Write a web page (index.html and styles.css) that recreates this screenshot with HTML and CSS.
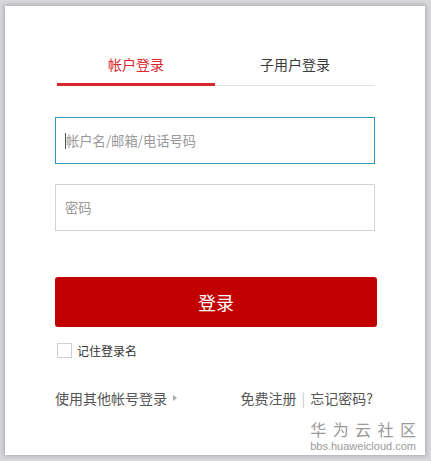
FILE: index.html
```html
<!DOCTYPE html>
<html lang="zh">
<head>
<meta charset="utf-8">
<title>登录</title>
<link rel="stylesheet" href="styles.css">
</head>
<body>
<div class="card">
  <div class="tabs">
    <div class="tab active">帐户登录</div>
    <div class="tab">子用户登录</div>
  </div>
  <div class="field focused"><span class="caret"></span><span class="ph">帐户名/邮箱/电话号码</span></div>
  <div class="field second"><span class="ph">密码</span></div>
  <button class="btn">登录</button>
  <label class="remember"><span class="box"></span><span>记住登录名</span></label>
  <div class="links">
    <span class="other">使用其他帐号登录<span class="tri"></span></span>
    <span class="right">免费注册<span class="sep">|</span>忘记密码?</span>
  </div>
  <div class="mark">
    <div class="mark-cn"><span>华</span><span>为</span><span>云</span><span>社</span><span>区</span></div>
    <div class="mark-en">bbs.huaweicloud.com</div>
  </div>
</div>
</body>
</html>
```
FILE: styles.css
```css
html, body {
  margin: 0;
  padding: 0;
}
body {
  background: #d9d9dd;
  width: 431px;
  height: 461px;
  overflow: hidden;
  font-family: "Noto Sans CJK SC", "Liberation Sans", sans-serif;
}
.card {
  position: relative;
  box-sizing: border-box;
  margin: 6px 0 0 5px;
  width: 420px;
  height: 449px;
  background: #fff;
  box-shadow: 0 0 5px 1px rgba(0, 0, 0, 0.22);
  padding: 48px 0 0 50px;
}
.tabs {
  display: flex;
  margin-left: 2px;
  width: 318px;
  border-bottom: 1px solid #e3e3e3;
}
.tab {
  flex: 1;
  text-align: center;
  font-size: 14px;
  line-height: 20px;
  padding-bottom: 9px;
  color: #3a3a3a;
}
.tab.active {
  color: #d9262c;
  border-bottom: 3px solid #d9262c;
  margin-bottom: -1px;
  flex: 0 0 158px;
}
.field {
  box-sizing: border-box;
  width: 320px;
  height: 47px;
  border: 1px solid #d4d4d4;
  display: flex;
  align-items: center;
  padding-left: 9px;
  font-size: 13.3px;
  color: #999;
}
.field.focused {
  margin-top: 31px;
  border-color: #3596bd;
}
.field.second {
  margin-top: 20px;
}
.caret {
  width: 1px;
  height: 16px;
  background: #555;
}
.btn {
  display: block;
  margin-top: 46px;
  width: 322px;
  height: 50px;
  border: none;
  border-radius: 3px;
  background: #c20000;
  color: #fff;
  font-family: "Noto Sans CJK SC", sans-serif;
  font-size: 18px;
  padding: 0;
}
.remember {
  display: flex;
  align-items: center;
  margin-top: 15px;
  margin-left: 2px;
  font-size: 12px;
  color: #333;
  gap: 5px;
}
.box {
  box-sizing: border-box;
  width: 15px;
  height: 15px;
  border: 1px solid #cfcfcf;
}
.links {
  display: flex;
  justify-content: space-between;
  align-items: center;
  width: 318px;
  margin-top: 29px;
  font-size: 14px;
  color: #555;
}
.other {
  display: flex;
  align-items: center;
}
.tri {
  width: 0;
  height: 0;
  border-left: 4px solid #aaa;
  border-top: 3.5px solid transparent;
  border-bottom: 3.5px solid transparent;
  margin-left: 6px;
}
.sep {
  color: #c8c8c8;
  margin: 0 5px;
}
.mark {
  position: absolute;
  right: 9px;
  bottom: 2px;
  color: #9a9a9a;
}
.mark-cn {
  display: flex;
  justify-content: space-between;
  font-size: 16px;
  line-height: 20px;
}
.mark-en {
  font-family: "Liberation Sans", sans-serif;
  font-size: 11px;
  line-height: 14px;
}
```
